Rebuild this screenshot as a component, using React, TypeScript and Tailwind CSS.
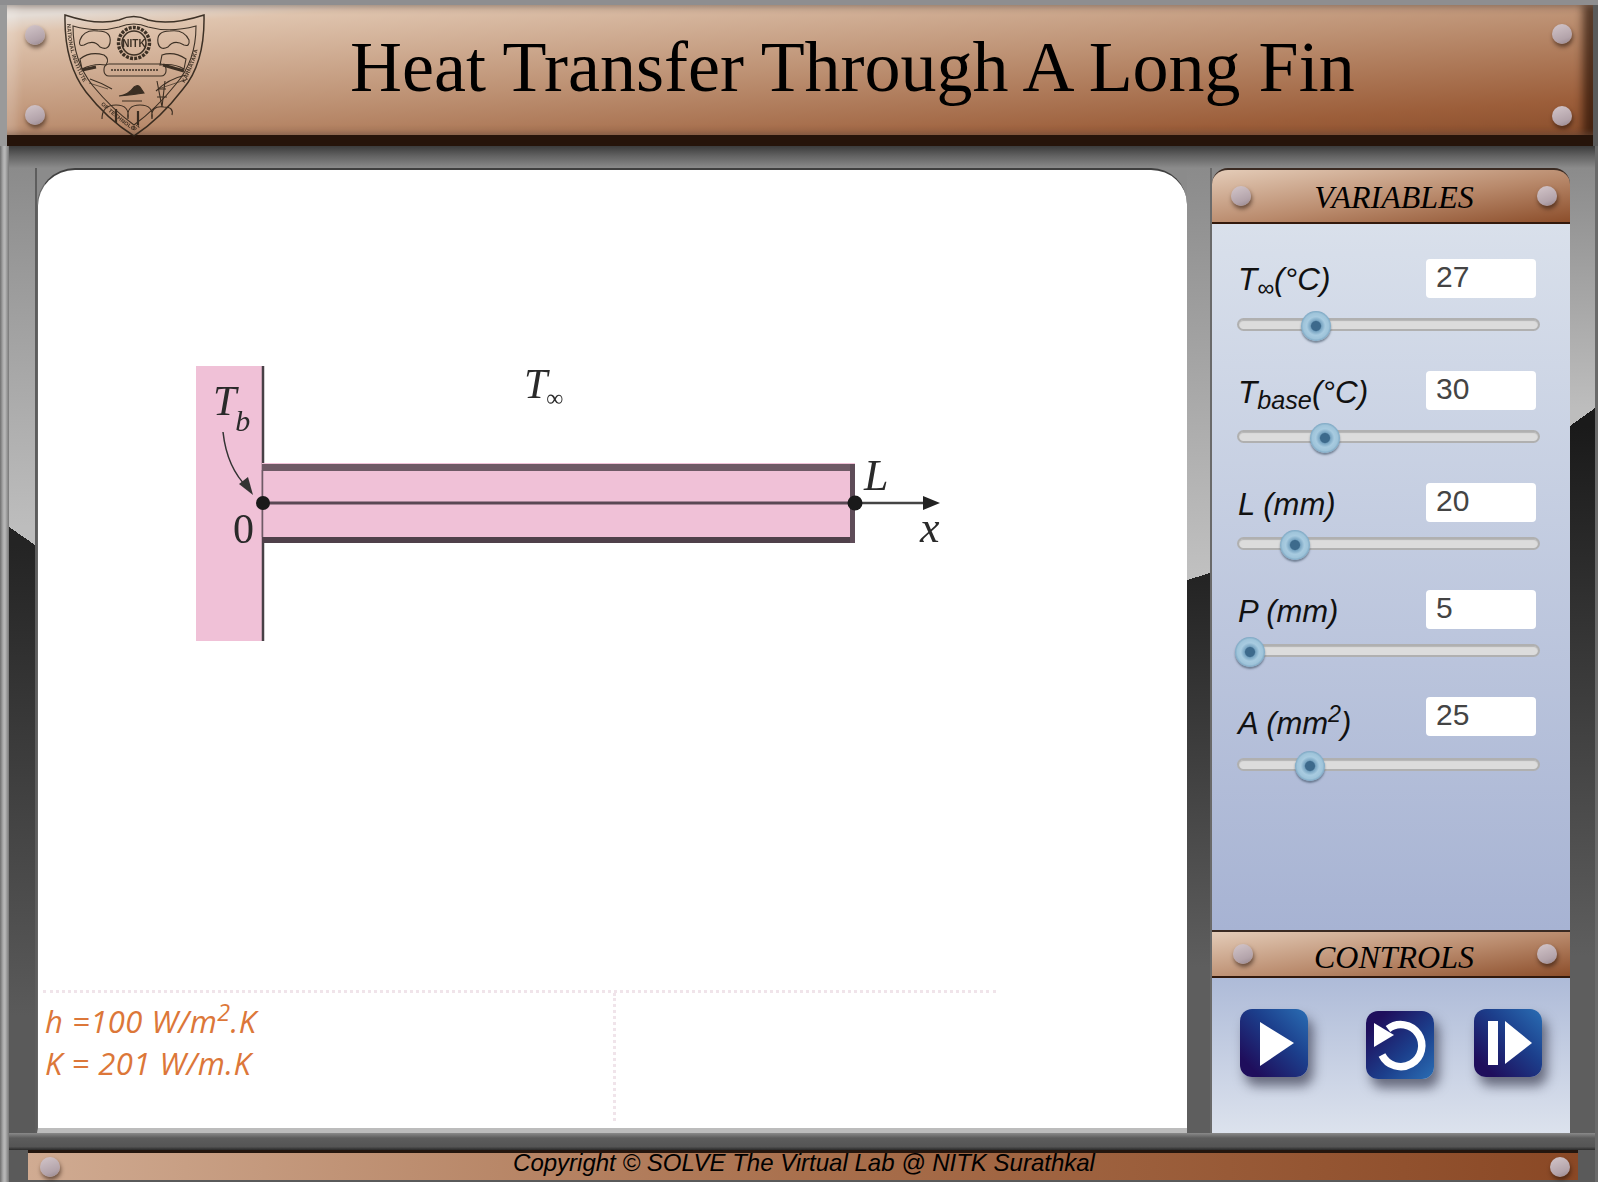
const serif = "font-['Liberation_Serif',serif]";

function Rivet() {
  return (
    <div className="w-[20px] h-[20px] rounded-full bg-[linear-gradient(160deg,#d3c6ca,#b3a3aa_70%,#94858c)] shadow-[1px_3px_4px_rgba(40,20,10,0.6)]" />
  );
}

function Logo() {
  const ink = "#2c2218";
  const rim = { fontFamily: "'Liberation Sans',sans-serif", fontSize: 5.5, fontWeight: 700, fill: ink, stroke: "none", letterSpacing: 0.2 };
  return (
    <svg width="142" height="124" viewBox="0 0 142 124" className="block opacity-90 blur-[0.4px]" fill="none" stroke={ink} strokeWidth="1.1">
      <path d="M1 2 Q34 13 55 7 Q70 0 84 7 Q106 13 140 2 Q141 50 119 76 Q96 106 70 123 Q43 106 22 79 Q0 50 1 2 Z" strokeWidth="1.5" />
      <path d="M9 13 Q34 20 55 14 Q70 8 84 14 Q106 20 132 13 Q132 48 112 71 Q92 96 70 112 Q48 96 29 73 Q9 48 9 13 Z" />
      <path id="rimLeft" d="M3 10 Q4 50 28 82" stroke="none" />
      <path id="rimBottom" d="M31 86 Q49 104 70 118 Q92 104 110 86" stroke="none" />
      <path id="rimRight" d="M114 80 Q136 50 137 10" stroke="none" />
      <text {...rim}><textPath href="#rimLeft" startOffset="1">NATIONAL INSTITUTE</textPath></text>
      <text {...rim}><textPath href="#rimBottom" startOffset="8">OF TECHNOLOGY</textPath></text>
      <text {...rim}><textPath href="#rimRight" startOffset="12">KARNATAKA</textPath></text>
      <circle cx="70" cy="30" r="15.5" strokeWidth="3.4" strokeDasharray="3 1.2" />
      <circle cx="70" cy="30" r="12" strokeWidth="1.6" />
      <text x="70" y="34" textAnchor="middle" fontFamily="'Liberation Sans',sans-serif" fontSize="10" fontWeight="700" fill={ink} stroke="none">NITK</text>
      <path d="M16 27 Q20 16 34 18 Q48 18 46 30 Q44 38 36 34 Q30 26 20 32 Q14 34 16 27 Z M16 46 Q26 38 40 42 Q46 46 42 52 Q30 50 18 56 Z" />
      <path d="M18 57 L32 54 M99 52 L120 58" strokeWidth="3" />
      <path d="M125 27 Q120 16 106 18 Q92 18 94 30 Q96 38 104 34 Q110 26 120 32 Q126 34 125 27 Z M98 42 Q110 38 122 46 L120 56 Q110 50 96 52 Z" />
      <rect x="40" y="51" width="62" height="12" rx="5" />
      <path d="M47 57 H94" strokeWidth="1.6" strokeDasharray="2 1" />
      <path d="M26 66 Q38 70 48 76 M92 78 Q104 66 122 62" />
      <path d="M25 70 L44 76 M94 76 L124 66" strokeWidth="0.7" />
      <path d="M55 83 Q64 82 70 74 Q74 71 76 74 L80 80 Q68 82 55 83 Z M58 88 H78" fill={ink} />
      <path d="M93 68 L98 94 M101 68 L98 94 M94 76 H102 M93 84 H103" />
      <path d="M38 106 Q38 92 52 92 Q66 92 64 106 M64 106 Q62 92 76 92 Q90 92 88 106 M88 106 Q86 92 100 94 Q110 94 108 102" />
      <path d="M52 96 V110 M74 98 V112" strokeWidth="2.2" />
    </svg>
  );
}

function Track({ left, gap }: { left: number; gap: string }) {
  return (
    <div className={`relative ml-[-1px] w-[303px] h-[13px] rounded-full bg-[#dcdcdc] border-2 border-[#b0b0b0] shadow-[inset_0_1px_1px_rgba(0,0,0,0.18)] ${gap}`}>
      <div
        className="absolute top-[-9px] w-[30px] h-[30px] rounded-full bg-[radial-gradient(circle_closest-side,#3d6a8c_30%,#7aa6c3_38%,#a8cbe0_62%,#9fc4da_85%,#7ca7c3)] shadow-[0_2px_2px_rgba(50,70,90,0.55)]"
        style={{ left: left - 2 }}
      />
    </div>
  );
}

function Variable({ label, value, left, gap, tail, shift }: { label: React.ReactNode; value: string; left: number; gap: string; tail: string; shift: string }) {
  return (
    <div className={tail}>
      <div className="flex items-center justify-between h-[39px]">
        <div className={`leading-[39px] italic text-[#111] font-['Liberation_Sans',sans-serif] ${shift}`}>{label}</div>
        <div className="w-[110px] h-[39px] rounded-[4px] bg-white pl-[10px] text-[#444] text-[30px] leading-[36px] font-['Liberation_Sans',sans-serif]">{value}</div>
      </div>
      <Track left={left} gap={gap} />
    </div>
  );
}

function WoodHead({ title, rounded, height, left, textShift }: { title: string; rounded: boolean; height: string; left: string; textShift: string }) {
  return (
    <div className={`${height} flex items-center justify-between ${left} pr-[13px] border-b-2 border-[#33190c] border-t-2 border-t-[#3a2a22] bg-[linear-gradient(172deg,#e4ccb8,#b98a6c_55%,#8c4e2b)] ${rounded ? "rounded-t-[16px]" : ""}`}>
      <Rivet />
      <div className={`${serif} italic text-[32px] leading-none text-black ${textShift}`}>{title}</div>
      <Rivet />
    </div>
  );
}

function Gutter({ upper, diag, lower, slope, extra }: { upper: string; diag: string; lower: string; slope: string; extra: string }) {
  return (
    <div className={`flex flex-col ${extra}`}>
      <div className={upper} />
      <div className={`${diag} ${slope}`} />
      <div className={`flex-1 ${lower}`} />
    </div>
  );
}

function Diagram() {
  const f = "'Liberation Serif',serif";
  return (
    <svg width="760" height="290" viewBox="0 0 760 290" className="block ml-[152px] mt-[190px] blur-[0.5px]">
      <rect x="6" y="6" width="67" height="275" fill="#f0c1d7" />
      <path d="M73 6 V281" stroke="#474046" strokeWidth="2.5" />
      <rect x="72" y="103" width="593" height="80" fill="#f0c1d7" />
      <rect x="72" y="104" width="593" height="7" fill="#6f5a66" />
      <rect x="72" y="177" width="593" height="6" fill="#4f404a" />
      <rect x="660" y="104" width="5" height="79" fill="#5e4c58" />
      <path d="M72.5 110 V177" stroke="#6f5a66" strokeWidth="1.5" />
      <path d="M73 143 H665" stroke="#5a4854" strokeWidth="3" />
      <path d="M665 143 H735" stroke="#444" strokeWidth="2.5" />
      <polygon points="733,136 750,143 733,150" fill="#222" />
      <circle cx="73" cy="143" r="7" fill="#1a1a1a" />
      <circle cx="665" cy="143" r="7.5" fill="#1a1a1a" />
      <path d="M33 72 Q37 108 58 128" stroke="#333" strokeWidth="1.5" fill="none" />
      <polygon points="63,135 49,124 58,117" fill="#333" />
      <g fontFamily={f} fill="#2a2a2a">
        <text x="23" y="55" fontSize="42" fontStyle="italic">T<tspan dx="-1" dy="16" fontSize="30">b</tspan></text>
        <text x="43" y="183" fontSize="42">0</text>
        <text x="334" y="38" fontSize="42" fontStyle="italic">T<tspan dx="-1" dy="8" fontSize="24" fontStyle="normal">∞</tspan></text>
        <text x="674" y="130" fontSize="44" fontStyle="italic">L</text>
        <text x="730" y="182" fontSize="44" fontStyle="italic">x</text>
      </g>
    </svg>
  );
}

function IconButton({ children, gradient, extra }: { children: React.ReactNode; gradient: string; extra: string }) {
  return (
    <div className={`w-[68px] h-[68px] rounded-[12px] shadow-[5px_9px_12px_rgba(20,20,40,0.55)] ${gradient} ${extra}`}>
      <svg width="68" height="68" viewBox="0 0 68 68" className="block">{children}</svg>
    </div>
  );
}

export default function App() {
  return (
    <div className="w-[1598px] h-[1182px] overflow-hidden flex flex-col bg-[#5a5a5a]">
      <div className="h-[5px] shrink-0 bg-[#8e8e90]" />
      <div className="flex shrink-0 h-[141px] bg-[linear-gradient(to_right,#9a9a9a_7px,transparent_7px)]">
        <div className="ml-[7px] w-[1586px] h-[141px] border-b-[11px] border-[#26140a] bg-[linear-gradient(176deg,#e4dcd5_0,#e4dcd5_5%,#dfc4ae_12%,#bd9173_50%,#9c5e3a_85%,#8a4e2c)] shadow-[inset_10px_0_8px_rgba(255,255,255,0.18),inset_-10px_0_8px_rgba(30,10,0,0.65)] flex justify-between pl-[18px] pr-[21px]">
          <div className="flex flex-col justify-between pt-[20px] pb-[10px]">
            <Rivet />
            <Rivet />
          </div>
          <div className="ml-[19px] mt-[8px] h-[124px] shrink-0">
            <Logo />
          </div>
          <div className={`${serif} ml-[144px] mt-[22px] text-[72px] leading-[80px] text-black whitespace-nowrap`}>Heat Transfer Through A Long Fin</div>
          <div className="ml-auto flex flex-col justify-between pt-[19px] pb-[9px]">
            <Rivet />
            <Rivet />
          </div>
        </div>
      </div>

      <div className="flex flex-1">
        <div className="w-[9px] shrink-0 bg-[linear-gradient(to_right,#6f6f6f,#adadad_35%,#b9b9b9_55%,#777)]" />
        <div className="flex-1 flex flex-col">
          <div className="h-[22px] shrink-0 bg-[linear-gradient(#3b3b3b,#626262_45%,#8b8b8b)]" />
          <div className="flex h-[965px] shrink-0 bg-[#8b8b8b]">
            <Gutter
              extra="w-[28px] border-r-2 border-[#5d5d5d]"
              upper="h-[359px] bg-[linear-gradient(#8b8b8b,#bdbdbd)]"
              diag="h-[18px]"
              slope="bg-[linear-gradient(to_top_right,#242424_50%,#bdbdbd_50%)]"
              lower="bg-[linear-gradient(#242424,#5a5a5a_80%)]"
            />
            <div className="w-[1150px] h-[965px] rounded-tl-[38px] rounded-tr-[36px] border-t-2 border-t-[#3f3f3f] border-b-[5px] border-b-[#bcbcbc] border-l border-l-[#666] bg-white flex flex-col">
              <Diagram />
              <div className="mt-auto ml-[5px] w-[953px] h-[138px] border-t-[3px] border-dotted border-[#f0e4ea]">
                <div className="w-[573px] h-[128px] border-r-[3px] border-dotted border-[#f0e4ea] pl-[2px] pt-[7px] font-['Open_Sans',sans-serif] font-medium italic text-[31px] tracking-[0.5px] leading-[42px] text-[#dc7739]">
                  <div className="whitespace-nowrap">h =100 W/m<sup>2</sup>.K</div>
                  <div className="whitespace-nowrap">K = 201 W/m.K</div>
                </div>
              </div>
            </div>
            <Gutter
              extra="w-[23px]"
              upper="h-[405px] bg-[linear-gradient(#8b8b8b,#c0c0c0)]"
              diag="h-[7px]"
              slope="bg-[linear-gradient(to_top_left,#242424_50%,#c0c0c0_50%)]"
              lower="bg-[linear-gradient(#242424,#5e5e5e_70%)]"
            />
            <div className="w-[360px] h-[965px] flex flex-col border-l-2 border-[#6a6a6a]">
              <WoodHead title="VARIABLES" rounded height="h-[56px] shrink-0" left="pl-[19px]" textShift="mt-[2px]" />
              <div className="h-[706px] shrink-0 bg-[linear-gradient(#d9e0eb,#a7b3d3)] pl-[26px] pr-[34px] pt-[35px]">
                <Variable label={<>T<sub>∞</sub>(°C)</>} value="27" left={64} gap="mt-[20px]" tail="mb-[40px]" shift="text-[31.5px] mt-[2px]" />
                <Variable label={<>T<sub className="text-[80%]">base</sub>(°C)</>} value="30" left={73} gap="mt-[20px]" tail="mb-[40px]" shift="text-[31.5px] mt-[3px]" />
                <Variable label="L (mm)" value="20" left={43} gap="mt-[15px]" tail="mb-[40px]" shift="text-[31px] mt-[4px]" />
                <Variable label="P (mm)" value="5" left={-2} gap="mt-[15px]" tail="mb-[40px]" shift="text-[31px] mt-[4px]" />
                <Variable label={<>A (mm<sup>2</sup>)</>} value="25" left={58} gap="mt-[22px]" tail="" shift="text-[31px] mt-[14px]" />
              </div>
              <WoodHead title="CONTROLS" rounded={false} height="h-[48px] shrink-0" left="pl-[21px]" textShift="mt-[6px] mr-[2px]" />
              <div className="flex-1 bg-[linear-gradient(#aebbd8,#dce2ed)] flex items-start pl-[28px] pt-[31px]">
                <IconButton gradient="bg-[linear-gradient(to_top_right,#1f0e5c_15%,#1c3f8c_60%,#2a6eb4)]" extra="">
                  <polygon points="20,13 54,34 20,57" fill="#fff" />
                </IconButton>
                <IconButton gradient="bg-[linear-gradient(to_bottom_right,#1f0e5c_15%,#1c3f8c_60%,#2a6eb4)]" extra="ml-[58px] mt-[2px]">
                  <path d="M22 18 A21 21 0 1 1 16 44" fill="none" stroke="#fff" strokeWidth="7.5" />
                  <polygon points="8,12 28,24 8,36" fill="#fff" />
                </IconButton>
                <IconButton gradient="bg-[linear-gradient(to_top_right,#1f0e5c_15%,#1c3f8c_60%,#2a6eb4)]" extra="ml-[40px]">
                  <rect x="14" y="12" width="10" height="44" fill="#fff" />
                  <polygon points="31,12 58,34 31,55" fill="#fff" />
                </IconButton>
              </div>
            </div>
            <Gutter
              extra="flex-1"
              upper="h-[240px] bg-[linear-gradient(#8b8b8b,#bdbdbd)]"
              diag="h-[18px]"
              slope="bg-[linear-gradient(to_top_left,#1a1a1a_50%,#bdbdbd_50%)]"
              lower="bg-[linear-gradient(#1a1a1a,#5e5e5e_75%)]"
            />
          </div>
          <div className="h-[17px] shrink-0 bg-[linear-gradient(#8a8a8a,#5c5c5c_30%,#555_80%,#2a2a2a)]" />
          <div className="ml-[19px] w-[1550px] h-[30px] shrink-0 border-t-[3px] border-[#24160e] bg-[linear-gradient(to_right,#d0ab92,#a9704d_50%,#8a4825)] flex items-center justify-between pl-[12px] pr-[8px]">
            <Rivet />
            <div className="text-[24px] leading-none italic text-black font-['Liberation_Sans',sans-serif] mr-[2px] mb-[8px]">Copyright © SOLVE The Virtual Lab @ NITK Surathkal</div>
            <Rivet />
          </div>
        </div>
        <div className="w-[3px] shrink-0 bg-[#6a6a6a]" />
      </div>
    </div>
  );
}
